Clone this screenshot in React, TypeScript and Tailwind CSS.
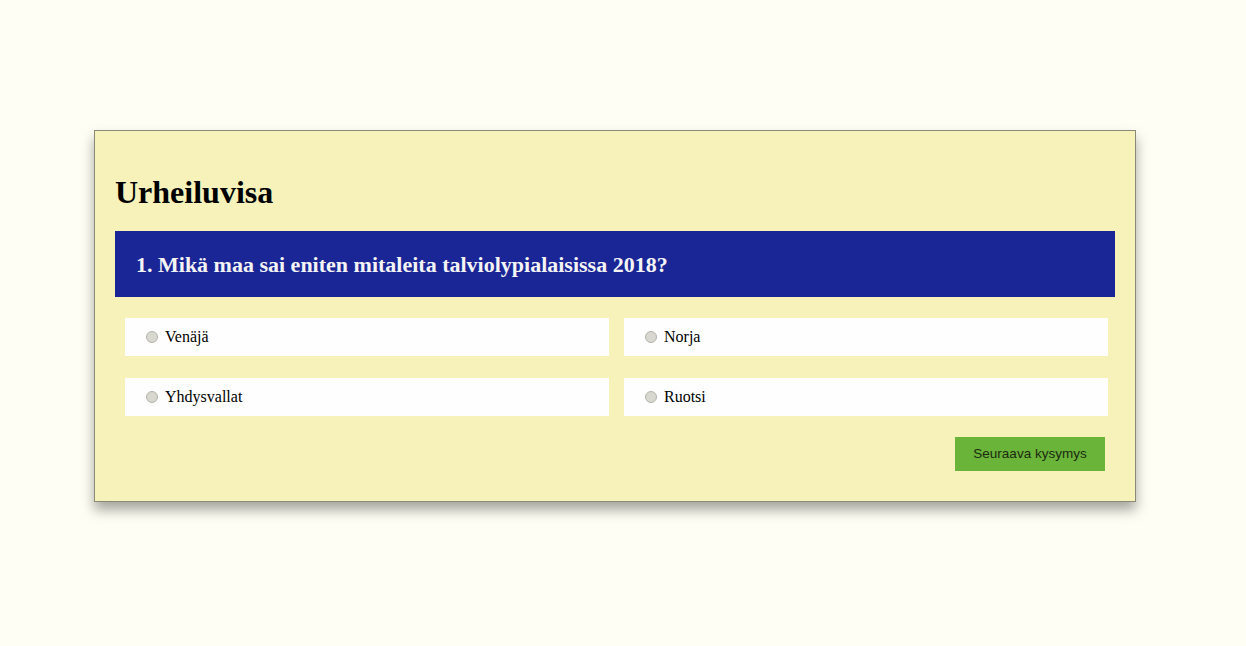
import React, { useState } from 'react';

const options = ['Venäjä', 'Norja', 'Yhdysvallat', 'Ruotsi'];

const App: React.FC = () => {
  const [ selected, setSelected ] = useState<string>('');

  return (
    <div className="min-h-[646px] w-full bg-[#fefef4] pt-[130px] font-['Liberation_Serif',serif]">
      <div className="ml-[94px] w-[1042px] h-[372px] border border-[#8a8a7a] bg-[#f6f2b9] px-[20px] shadow-[0_8px_12px_rgba(0,0,0,0.35)]">
        <h1 className="mt-[43px] text-[32px] font-bold leading-[36px] text-black">Urheiluvisa</h1>
        <div className="mt-[21px] h-[66px] bg-[#1a2596] pl-[21px] flex items-center">
          <h2 className="text-[22px] font-bold text-[#f4f4f4]">1. Mikä maa sai eniten mitaleita talviolypialaisissa 2018?</h2>
        </div>
        <div className="mt-[21px] ml-[10px] w-[983px] grid grid-cols-2 gap-x-[15px] gap-y-[22px]">
          {options.map((option) => (
            <label key={option} className="h-[38px] bg-[#fefefe] flex items-center pl-[21px] cursor-pointer">
              <input
                type="radio"
                name="answer"
                checked={selected === option}
                onChange={() => setSelected(option)}
                className="appearance-none w-[12px] h-[12px] rounded-full border border-[#b4b4ac] bg-[#d8d8d0] checked:bg-[#1a2596]"
              />
              <span className="ml-[7px] text-[16px] text-black">{option}</span>
            </label>
          ))}
        </div>
        <div className="mt-[21px] flex justify-end pr-[10px]">
          <button className="w-[150px] h-[34px] bg-[#6ab43a] text-[13.5px] text-[#1c2a10] font-['Liberation_Sans',sans-serif]">
            Seuraava kysymys
          </button>
        </div>
      </div>
    </div>
  );
};

export default App;
